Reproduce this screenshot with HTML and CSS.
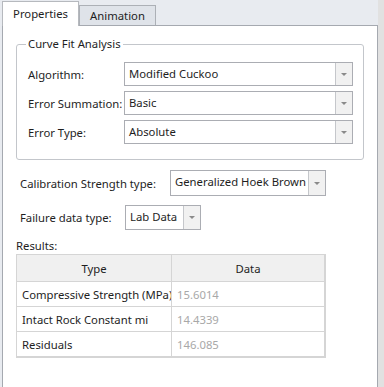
FILE: index.html
```html
<!DOCTYPE html>
<html lang="en">
<head>
    <meta charset="UTF-8">
    <title>Properties</title>
    <link rel="stylesheet" href="styles.css">
</head>
<body>
    <div class="window">
        <div class="main">
            <div class="tabstrip">
                <div class="tab active">Properties</div>
                <div class="tab">Animation</div>
            </div>

            <div class="panel">
                <fieldset class="group">
                    <legend>Curve Fit Analysis</legend>
                    <div class="group-row">
                        <span class="label">Algorithm:</span>
                        <div class="combo wide"><span class="combo-text">Modified Cuckoo</span><span class="combo-btn"></span></div>
                    </div>
                    <div class="group-row">
                        <span class="label">Error Summation:</span>
                        <div class="combo wide"><span class="combo-text">Basic</span><span class="combo-btn"></span></div>
                    </div>
                    <div class="group-row">
                        <span class="label">Error Type:</span>
                        <div class="combo wide"><span class="combo-text">Absolute</span><span class="combo-btn"></span></div>
                    </div>
                </fieldset>

                <div class="field-row calib">
                    <span class="label">Calibration Strength type:</span>
                    <div class="combo calib-combo"><span class="combo-text">Generalized Hoek Brown</span><span class="combo-btn"></span></div>
                </div>

                <div class="field-row failure">
                    <span class="label">Failure data type:</span>
                    <div class="combo small-combo"><span class="combo-text">Lab Data</span><span class="combo-btn"></span></div>
                </div>

                <div class="results-label">Results:</div>
                <table class="results">
                    <thead>
                        <tr><th>Type</th><th>Data</th></tr>
                    </thead>
                    <tbody>
                        <tr><td>Compressive Strength (MPa)</td><td class="value">15.6014</td></tr>
                        <tr><td>Intact Rock Constant mi</td><td class="value">14.4339</td></tr>
                        <tr><td>Residuals</td><td class="value">146.085</td></tr>
                    </tbody>
                </table>
            </div>
        </div>
        <div class="side"></div>
    </div>
</body>
</html>
```

FILE: styles.css
```css
/* Properties pane */
body {
    margin: 0;
    font-family: "Noto Sans", "Open Sans", Arial, sans-serif;
    font-size: 11.3px;
    color: #1e1e1e;
    background-color: #e8ebf0;
}

.window {
    display: flex;
    width: 384px;
    height: 387px;
    overflow: hidden;
}

.main {
    width: 378px;
    display: flex;
    flex-direction: column;
    background-color: #e8ebf0;
}

.side {
    flex: 1;
    background-color: #e1e1e1;
}

.tabstrip {
    display: flex;
    align-items: flex-end;
    height: 26px;
    padding-left: 2px;
    margin-bottom: -1px;
    position: relative;
    z-index: 1;
}

.tab {
    height: 20px;
    line-height: 19px;
    border: 1px solid #acb0b6;
    border-bottom: none;
    background-color: #dfe3e9;
    color: #1e1e1e;
    box-sizing: border-box;
    width: 77px;
    margin-bottom: 1px;
    text-align: center;
}

.tab.active {
    height: 25px;
    line-height: 24px;
    background-color: #ffffff;
    margin-bottom: 0;
    border-color: #b6b9be;
}

.panel {
    flex: 1;
    margin-left: 2px;
    border: 1px solid #a5a9b0;
    border-bottom: none;
    background-color: #ffffff;
    padding: 10px 13px 0 13px;
}

.group {
    margin: 0;
    padding: 10px 10px 15px 11px;
    border: 1px solid #c3c6cb;
    border-radius: 3px;
    display: flex;
    flex-direction: column;
    gap: 5px;
}

.group legend {
    padding: 0 2px;
    margin-left: -2px;
    line-height: 16px;
}

.group-row {
    display: flex;
    align-items: center;
}

.group-row .label {
    width: 96px;
    flex-shrink: 0;
}

.label {
    white-space: nowrap;
}

.combo {
    display: flex;
    height: 24px;
    border: 1px solid #abadb3;
    box-sizing: border-box;
    background-color: #ffffff;
}

.combo.wide {
    flex: 1;
}

.combo-text {
    flex: 1;
    padding-left: 4px;
    line-height: 22px;
    white-space: nowrap;
    overflow: hidden;
}

.combo-btn {
    width: 16px;
    flex-shrink: 0;
    border-left: 1px solid #c5c7cb;
    background-color: #f1f1f1;
    display: flex;
    align-items: center;
    justify-content: center;
}

.combo-btn::after {
    content: "";
    width: 0;
    height: 0;
    border-left: 3px solid transparent;
    border-right: 3px solid transparent;
    border-top: 3px solid #8a8a8a;
}

.field-row {
    display: flex;
    align-items: center;
    margin-left: 4px;
}

.calib {
    margin-top: 10px;
}

.calib .label {
    width: 150px;
}

.calib-combo {
    width: 156px;
    height: 26px;
}

.failure {
    margin-top: 9px;
}

.failure .label {
    width: 105px;
}

.small-combo {
    width: 76px;
    height: 25px;
}

.results-label {
    margin-top: 8px;
    line-height: 16px;
}

.results {
    border-collapse: collapse;
    width: 310px;
    table-layout: fixed;
    border-left: 1px solid #d5d5d5;
    border-top: 1px solid #d5d5d5;
    border-right: 2px solid #d5d5d5;
    border-bottom: 2px solid #d5d5d5;
}

.results th,
.results td {
    border: 1px solid #d5d5d5;
    height: 24px;
    padding: 0 5px;
    white-space: nowrap;
    overflow: hidden;
}

.results th {
    height: 26px;
    font-weight: normal;
    background-color: #f0f0f0;
    text-align: center;
}

.results th:first-child {
    width: 144px;
}

.results .value {
    color: #a8a8a8;
}
```
